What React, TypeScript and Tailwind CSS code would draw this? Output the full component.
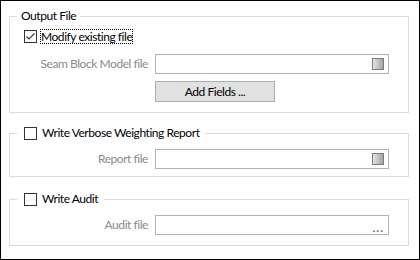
const FONT = "font-['Lato','Segoe_UI','Liberation_Sans',sans-serif] tracking-[-0.45px]";

const CheckBox: React.FC<{ checked?: boolean }> = ({ checked }) => (
  <span className="w-[13px] h-[13px] border border-[#333333] bg-white flex items-center justify-center shrink-0">
    {checked && (
      <svg width="11" height="11" viewBox="0 0 11 11">
        <path d="M1.5 5.5 L4 8 L9.5 2.5" fill="none" stroke="#333333" strokeWidth="1.1" />
      </svg>
    )}
  </span>
);

const FileInput: React.FC<{ dots?: boolean }> = ({ dots }) => (
  <div className="w-[234px] h-[20px] border border-[#b4b4b4] bg-white flex items-center justify-end pr-[4px]">
    {dots ? (
      <span className="text-[12px] leading-none text-[#6d6d6d] font-bold tracking-[1px] pb-[1px] mt-[6px]">...</span>
    ) : (
      <span className="w-[12px] h-[12px] border border-[#7c7c7c] bg-gradient-to-r from-[#e4e4e4] to-[#a4a4a4]" />
    )}
  </div>
);

const FieldRow: React.FC<{ label: string; dots?: boolean; className?: string }> = ({ label, dots, className }) => (
  <div className={`flex items-center gap-[7px] ${className ?? ""}`}>
    <span className="w-[138px] text-right text-[#8a8a8a] leading-4">{label}</span>
    <FileInput dots={dots} />
  </div>
);

const App: React.FC = () => {
  return (
    <div className={`w-[420px] h-[260px] border border-black bg-white pl-[8px] pr-[10px] pt-[7px] text-[12px] text-black ${FONT}`}>
      <fieldset className="border border-[#dcdcdc] pb-[10px]">
        <legend className="ml-[7px] px-[4px] leading-4">Output File</legend>
        <div className="flex items-center h-[15px] mt-[5px] ml-[14px] gap-[3px]">
          <CheckBox checked />
          <span className="leading-[15px] px-[1px] outline outline-1 outline-dotted outline-black -outline-offset-1">Modify existing file</span>
        </div>
        <FieldRow label="Seam Block Model file" className="mt-[10px]" />
        <button className="ml-[145px] mt-[7px] w-[120px] h-[21px] bg-[#e1e1e1] border border-[#adadad] leading-4 flex items-center justify-center">
          Add Fields ...
        </button>
      </fieldset>

      <fieldset className="border border-[#dcdcdc] mt-[12px] pb-[7px]">
        <legend className="ml-[7px] pl-[7px] pr-[6px]">
          <div className="flex items-center gap-[5px] h-4">
            <CheckBox />
            <span className="leading-4">Write Verbose Weighting Report</span>
          </div>
        </legend>
        <FieldRow label="Report file" className="mt-[8px]" />
      </fieldset>

      <fieldset className="border border-[#dcdcdc] mt-[14px] pb-[10px]">
        <legend className="ml-[7px] pl-[7px] pr-[6px]">
          <div className="flex items-center gap-[5px] h-4">
            <CheckBox />
            <span className="leading-4">Write Audit</span>
          </div>
        </legend>
        <FieldRow label="Audit file" dots className="mt-[8px]" />
      </fieldset>
    </div>
  );
};

export default App;
